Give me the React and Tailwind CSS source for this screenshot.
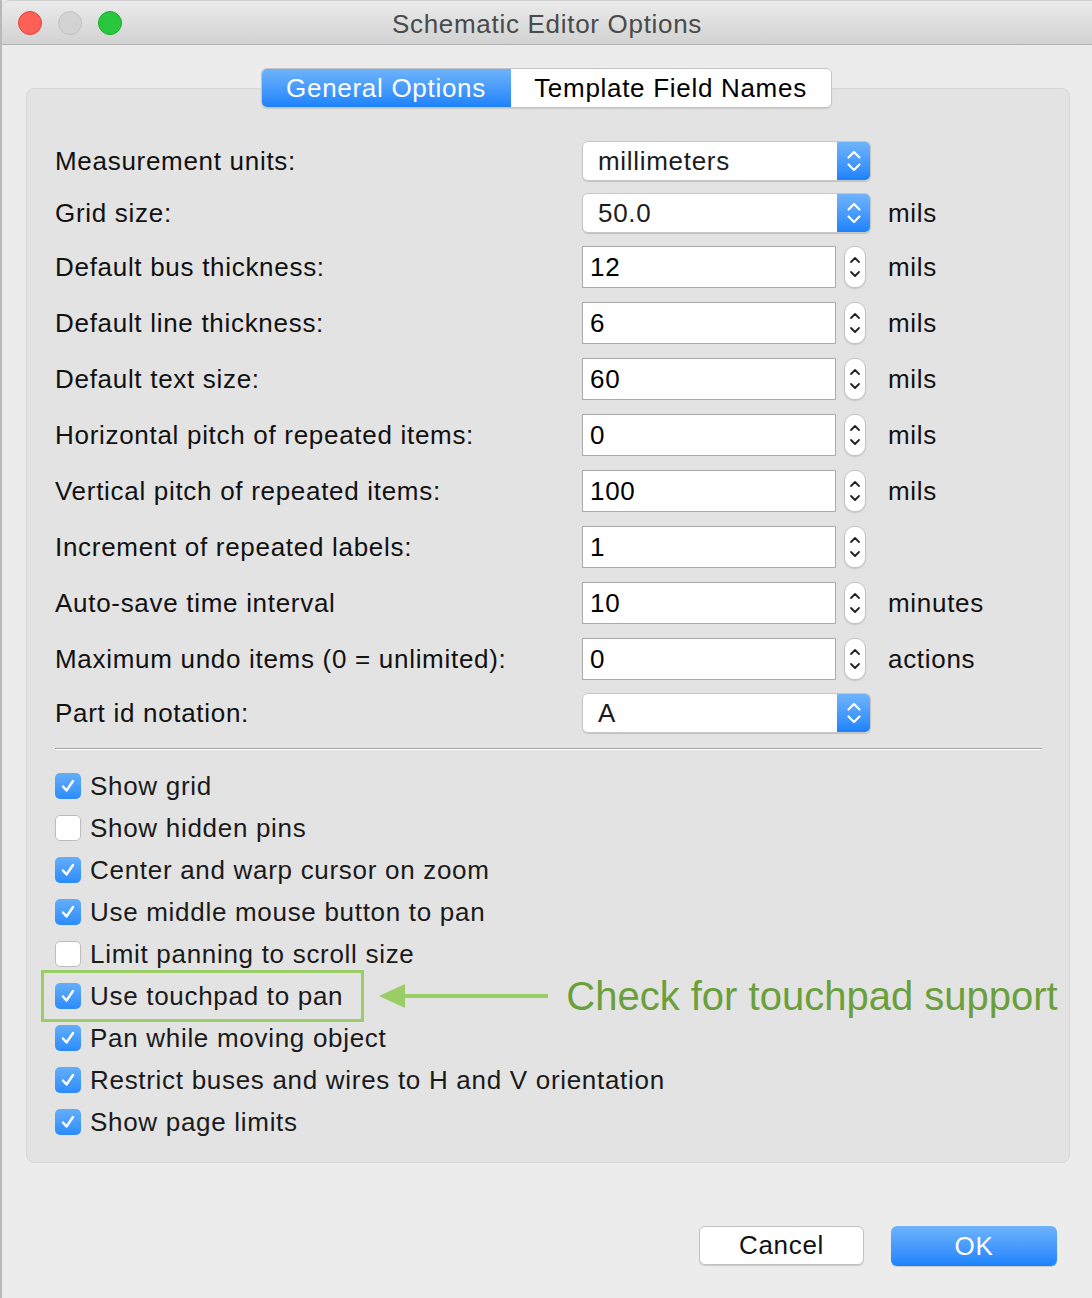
import React from 'react';

const FONT = { fontFamily: '"Liberation Sans", Arial, Helvetica, sans-serif' };

// ── Little drawings ────────────────────────────────────────────────────────────
const PopupChevrons = () => (
  <svg width="16" height="26" viewBox="0 0 16 26" fill="none">
    <path d="M2.5 9.5 L8 4 L13.5 9.5" stroke="white" strokeWidth="2.2" strokeLinecap="round" strokeLinejoin="round" />
    <path d="M2.5 16.5 L8 22 L13.5 16.5" stroke="white" strokeWidth="2.2" strokeLinecap="round" strokeLinejoin="round" />
  </svg>
);

const StepperChevrons = () => (
  <svg width="12" height="30" viewBox="0 0 12 30" fill="none">
    <path d="M2 10 L6 6 L10 10" stroke="#222" strokeWidth="1.8" strokeLinecap="round" strokeLinejoin="round" />
    <path d="M2 20 L6 24 L10 20" stroke="#222" strokeWidth="1.8" strokeLinecap="round" strokeLinejoin="round" />
  </svg>
);

const Check = () => (
  <svg width="18" height="18" viewBox="0 0 18 18" fill="none">
    <path d="M4 9.5 L7.5 13.5 L14 4" stroke="white" strokeWidth="2.4" strokeLinecap="round" strokeLinejoin="round" />
  </svg>
);

// ── Controls ───────────────────────────────────────────────────────────────────
const Popup = ({ value }) => (
  <div className="flex h-[40px] w-[289px] overflow-hidden rounded-[6px] border border-[#c6c6c6] shadow-[0_1px_1px_rgba(0,0,0,0.15)]">
    <div className="flex flex-1 items-center bg-white pl-[15px] text-[26px] text-[#1c1c1c]">{value}</div>
    <div className="flex w-[33px] items-center justify-center bg-gradient-to-b from-[#6fb4fb] to-[#1a82fb]">
      <PopupChevrons />
    </div>
  </div>
);

const Stepper = ({ value }) => (
  <div className="flex items-center gap-[8px]">
    <div className="flex h-[42px] w-[254px] items-center border border-[#ababab] bg-white pl-[7px] text-[26px] text-black">{value}</div>
    <div className="flex h-[42px] w-[22px] items-center justify-center rounded-[10px] border border-[#c4c4c4] bg-white shadow-[0_1px_1px_rgba(0,0,0,0.12)]">
      <StepperChevrons />
    </div>
  </div>
);

const fields = [
  { label: 'Measurement units:', kind: 'popup', value: 'millimeters' },
  { label: 'Grid size:', kind: 'popup', value: '50.0', unit: 'mils' },
  { label: 'Default bus thickness:', kind: 'step', value: '12', unit: 'mils' },
  { label: 'Default line thickness:', kind: 'step', value: '6', unit: 'mils' },
  { label: 'Default text size:', kind: 'step', value: '60', unit: 'mils' },
  { label: 'Horizontal pitch of repeated items:', kind: 'step', value: '0', unit: 'mils' },
  { label: 'Vertical pitch of repeated items:', kind: 'step', value: '100', unit: 'mils' },
  { label: 'Increment of repeated labels:', kind: 'step', value: '1' },
  { label: 'Auto-save time interval', kind: 'step', value: '10', unit: 'minutes' },
  { label: 'Maximum undo items (0 = unlimited):', kind: 'step', value: '0', unit: 'actions' },
  { label: 'Part id notation:', kind: 'popup', value: 'A' },
];

const options = [
  { label: 'Show grid', on: true },
  { label: 'Show hidden pins', on: false },
  { label: 'Center and warp cursor on zoom', on: true },
  { label: 'Use middle mouse button to pan', on: true },
  { label: 'Limit panning to scroll size', on: false },
  { label: 'Use touchpad to pan', on: true, callout: true },
  { label: 'Pan while moving object', on: true },
  { label: 'Restrict buses and wires to H and V orientation', on: true },
  { label: 'Show page limits', on: true },
];

const Checkbox = ({ on }) =>
  on ? (
    <div className="flex h-[26px] w-[26px] shrink-0 items-center justify-center rounded-[5px] bg-gradient-to-b from-[#63aefb] to-[#2a8bfb]">
      <Check />
    </div>
  ) : (
    <div className="h-[26px] w-[26px] shrink-0 rounded-[5px] border border-[#bcbcbc] bg-white" />
  );

const CheckRow = ({ label, on }) => (
  <div className="flex shrink-0 items-center gap-[9px]">
    <Checkbox on={on} />
    <span className="whitespace-nowrap text-[26px] text-[#1a1a1a]">{label}</span>
  </div>
);

// ── Dialog ─────────────────────────────────────────────────────────────────────
export default function App() {
  return (
    <div style={FONT} className="flex h-[1298px] w-[1092px] flex-col overflow-hidden border-l-2 border-[#b9b9b9] bg-[#ececec] tracking-[0.7px]">
      {/* title bar */}
      <div className="relative flex h-[45px] shrink-0 items-center justify-center rounded-tl-[8px] border-b border-t border-[#b3b3b3] border-t-[#d0d0d0] bg-gradient-to-b from-[#ebebeb] to-[#d2d2d2]">
        <div className="absolute left-[16px] top-[10px] flex gap-[16px]">
          <span className="h-[24px] w-[24px] rounded-full border border-[#e0443e] bg-[#fe5f57]" />
          <span className="h-[24px] w-[24px] rounded-full border border-[#c2c2c2] bg-[#d3d3d3]" />
          <span className="h-[24px] w-[24px] rounded-full border border-[#1aab29] bg-[#29c63f]" />
        </div>
        <span className="pt-[3px] text-[26px] text-[#4a4a4a]">Schematic Editor Options</span>
      </div>

      {/* tabs */}
      <div className="relative z-10 mt-[23px] flex justify-center pr-[2px]">
        <div className="flex h-[40px] overflow-hidden rounded-[6px] border border-[#c4c4c4] shadow-[0_1px_1px_rgba(0,0,0,0.12)]">
          <div className="flex w-[249px] items-center justify-center bg-gradient-to-b from-[#6db3fb] to-[#1a82fb] text-[26px] text-white">General Options</div>
          <div className="flex w-[320px] items-center justify-center bg-white text-[26px] text-black">Template Field Names</div>
        </div>
      </div>

      {/* panel */}
      <div className="-mt-[20px] ml-[24px] mr-[22px] rounded-[8px] border border-[#d6d6d6] bg-[#e3e3e3] pb-[19px] pl-[28px] pr-[27px] pt-[46px]">
        <div className="flex flex-col">
          {fields.map((f) => (
            <div key={f.label} className={`flex items-center ${f.kind === 'popup' ? 'h-[52px]' : 'h-[56px]'}`}>
              <span className="w-[527px] text-[26px] text-[#111]">{f.label}</span>
              <div className="w-[306px]">
                {f.kind === 'popup' ? <Popup value={f.value} /> : <Stepper value={f.value} />}
              </div>
              {f.unit && <span className="text-[26px] text-[#111]">{f.unit}</span>}
            </div>
          ))}
        </div>

        <div className="mt-[9px] h-[2px] border-b border-t border-b-white border-t-[#a3a3a3]" />

        <div className="mt-[15px] flex flex-col">
          {options.map((o) =>
            o.callout ? (
              <div key={o.label} className="flex h-[42px] items-center">
                <div className="-ml-[14px] flex h-[52px] shrink-0 items-center border-[3px] border-[#9bcd66] pl-[11px] pr-[18px]">
                  <CheckRow label={o.label} on={o.on} />
                </div>
                <svg className="ml-[15px] shrink-0" width="170" height="30" viewBox="0 0 170 30" fill="none">
                  <path d="M18 15 H169" stroke="#9bcd66" strokeWidth="4" />
                  <path d="M0 15 L26 3 L26 27 Z" fill="#9bcd66" />
                </svg>
                <span className="ml-[17px] whitespace-nowrap text-[40px] leading-none tracking-normal text-[#6a9f3b]">Check for touchpad support</span>
              </div>
            ) : (
              <div key={o.label} className="flex h-[42px] items-center">
                <CheckRow label={o.label} on={o.on} />
              </div>
            )
          )}
        </div>
      </div>

      {/* buttons */}
      <div className="mt-[63px] flex justify-end gap-[27px] pr-[35px]">
        <div className="flex h-[39px] w-[165px] items-center justify-center rounded-[6px] border border-[#c2c2c2] bg-white text-[26px] text-[#111] shadow-[0_1px_1px_rgba(0,0,0,0.15)]">Cancel</div>
        <div className="flex h-[40px] w-[166px] items-center justify-center rounded-[6px] bg-gradient-to-b from-[#6db3fb] to-[#1a82fb] text-[26px] text-white shadow-[0_1px_1px_rgba(0,0,0,0.15)]">OK</div>
      </div>
    </div>
  );
}
